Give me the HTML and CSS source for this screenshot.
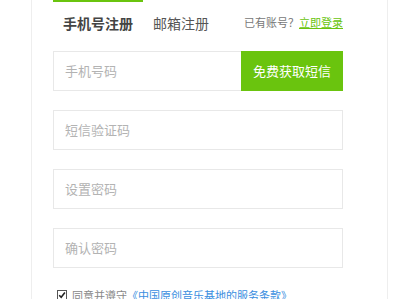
FILE: index.html
```html
<!DOCTYPE html>
<html lang="zh-CN">
<head>
<meta charset="utf-8">
<link rel="stylesheet" href="styles.css">
</head>
<body>
<div class="panel">
  <div class="head">
    <div class="tabs">
      <a class="tab active">手机号注册</a>
      <a class="tab">邮箱注册</a>
    </div>
    <div class="login">已有账号？<a class="login-link">立即登录</a></div>
  </div>
  <div class="form">
    <div class="row">
      <div class="field">手机号码</div>
      <div class="sms">免费获取短信</div>
    </div>
    <div class="row"><div class="field">短信验证码</div></div>
    <div class="row"><div class="field">设置密码</div></div>
    <div class="row"><div class="field">确认密码</div></div>
  </div>
  <div class="agree">
    <svg class="check" width="10" height="10" viewBox="0 0 10 10"><rect x="0.5" y="0.5" width="9" height="9" fill="#fff" stroke="#555"/><path d="M2.2 5.2 L4.2 7.2 L7.9 2.6" fill="none" stroke="#222" stroke-width="1.6"/></svg>
    <span class="agree-text">同意并遵守</span><a class="terms">《中国原创音乐基地的服务条款》</a>
  </div>
</div>
</body>
</html>
```
FILE: styles.css
```css
html, body {
  margin: 0;
  padding: 0;
  background: #fff;
}
body {
  font-family: "Microsoft YaHei", "Noto Sans CJK SC", "Noto Sans", sans-serif;
  color: #666;
}
.panel {
  margin-left: 31px;
  width: 334px;
  height: 299px;
  border-left: 1px solid #eee;
  border-right: 1px solid #eee;
  padding-left: 21px;
  box-sizing: content-box;
}
.head {
  display: flex;
  align-items: flex-start;
  width: 290px;
  height: 44px;
  justify-content: space-between;
}
.tabs {
  display: flex;
}
.tab {
  display: block;
  padding: 0 10px;
  border-top: 2px solid transparent;
  line-height: 42px;
  font-size: 14px;
  color: #555;
}
.tab.active {
  border-top-color: #6ac40e;
  font-weight: bold;
  color: #444;
}
.login {
  font-size: 11px;
  line-height: 44px;
  color: #777;
}
.login-link {
  color: #6ac40e;
  text-decoration: underline;
}
.form {
  margin-top: 7px;
  width: 290px;
}
.row {
  display: flex;
  height: 40px;
  margin-bottom: 19px;
  border: 1px solid #e8e8e8;
  box-sizing: border-box;
}
.field {
  flex: 1;
  padding-left: 11px;
  line-height: 38px;
  font-size: 13px;
  color: #b3b3b3;
}
.sms {
  width: 102px;
  margin: -1px -1px -1px 0;
  background: #6ac40e;
  color: #fff;
  font-size: 13px;
  line-height: 40px;
  text-align: center;
}
.agree {
  display: flex;
  align-items: center;
  margin-top: 19px;
  padding-left: 4px;
  font-size: 11px;
  line-height: 16px;
}
.check {
  margin-right: 5px;
}
.agree-text {
  color: #888;
}
.terms {
  color: #3a8ee0;
  text-decoration: underline;
}
```
